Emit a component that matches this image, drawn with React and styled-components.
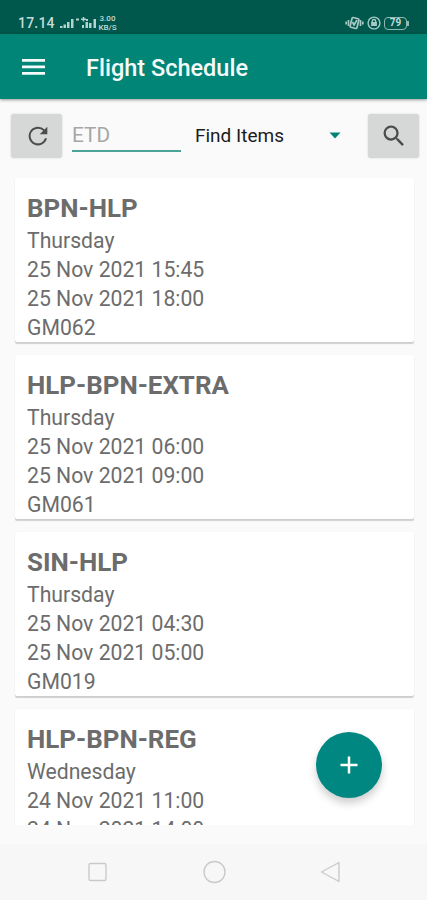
import React from 'react'
import styled, { createGlobalStyle } from 'styled-components'

const GlobalStyle = createGlobalStyle`
    body {
        margin: 0;
        background: #fafafa;
        font-family: Roboto, "Liberation Sans", sans-serif;
    }

    * {
        box-sizing: border-box;
    }
`

const Screen = styled.div`
    display: flex;
    flex-direction: column;
    width: 427px;
    height: 900px;
    overflow: hidden;
    background: #fafafa;
`

const StatusBar = styled.div`
    display: flex;
    flex: none;
    justify-content: space-between;
    height: 34px;
    padding: 14px 18px 0 18px;
    background: #00574b;
    color: #c3dcd8;
`

const StatusGroup = styled.div`
    display: flex;
    align-items: center;
    height: 18px;
    gap: ${props => props.$gap || 0}px;
`

const Clock = styled.span`
    width: 41px;
    font-size: 14px;
    font-weight: 500;
    line-height: 18px;
    letter-spacing: 0.2px;
`

const Speed = styled.div`
    display: flex;
    flex-direction: column;
    align-items: center;
    width: 19px;
    font-size: 8px;
    font-weight: 500;
    line-height: 9px;
`

const Battery = styled.div`
    display: flex;
    align-items: center;
    justify-content: center;
    width: 23px;
    height: 13px;
    border: 1px solid #8fbab4;
    border-radius: 4px;
    font-size: 10px;
    font-weight: 700;
    line-height: 10px;
`

const BatteryTip = styled.div`
    width: 2px;
    height: 5px;
    background: #8fbab4;
`

const AppBar = styled.div`
    display: flex;
    flex: none;
    align-items: center;
    height: 65px;
    padding-left: 22px;
    background: #008577;
    box-shadow: 0 1px 3px rgba(0, 0, 0, 0.4);
    color: #f4fbfa;
`

const AppTitle = styled.h1`
    margin: 3px 0 0 40px;
    font-size: 23.5px;
    font-weight: 500;
    line-height: 30px;
`

const Toolbar = styled.div`
    display: flex;
    flex: none;
    align-items: center;
    height: 79px;
    padding: 0 8px 6px 11px;
`

const ToolButton = styled.button`
    display: flex;
    align-items: center;
    justify-content: center;
    width: 51px;
    height: 44px;
    padding: ${props => props.$pad || '0'};
    border: 0;
    border-radius: 3px;
    background: #d6d8d7;
    box-shadow: 0 0 2px rgba(0, 0, 0, 0.18);
    color: #4c4c4c;
`

const SearchField = styled.div`
    width: 109px;
    height: 32px;
    margin: 0 14px 0 10px;
    border-bottom: 2px solid #4ba297;
    color: #a6a6a6;
    font-size: 20.8px;
    line-height: 31px;
`

const Picker = styled.div`
    display: flex;
    align-items: center;
    justify-content: space-between;
    width: 146px;
    margin-right: 27px;
    color: #1c1c1c;
    font-size: 19px;
    line-height: 24px;
`

const List = styled.div`
    display: flex;
    flex-direction: column;
    flex: none;
    gap: 13px;
    height: 647px;
    padding: 0 13px 0 15px;
    overflow: hidden;
`

const Card = styled.div`
    flex: none;
    height: 164px;
    padding: 14px 12px 0;
    border-radius: 2px;
    background: #fff;
    box-shadow: 0 2px 1px rgba(0, 0, 0, 0.17), 0 0 1px rgba(0, 0, 0, 0.08);
    color: #6c6c6c;
`

const Route = styled.h2`
    margin: 0 0 2px;
    font-size: 25.9px;
    font-weight: 700;
    line-height: 32px;
`

const Line = styled.div`
    font-size: 21.2px;
    line-height: 29px;
    white-space: nowrap;
`

const AddButton = styled.button`
    position: absolute;
    left: 316px;
    top: 732px;
    display: flex;
    align-items: center;
    justify-content: center;
    width: 66px;
    height: 66px;
    padding: 0;
    border: 0;
    border-radius: 50%;
    background: #008781;
    box-shadow: 0 5px 8px rgba(0, 0, 0, 0.2);
`

const NavBar = styled.div`
    display: flex;
    flex: none;
    align-items: center;
    justify-content: space-between;
    height: 56px;
    margin-top: 19px;
    padding: 0 85px 0 87px;
    background: #f7f7f7;
`

const flights = [
    { route: 'BPN-HLP', day: 'Thursday', etd: '25 Nov 2021 15:45', eta: '25 Nov 2021 18:00', code: 'GM062' },
    { route: 'HLP-BPN-EXTRA', day: 'Thursday', etd: '25 Nov 2021 06:00', eta: '25 Nov 2021 09:00', code: 'GM061' },
    { route: 'SIN-HLP', day: 'Thursday', etd: '25 Nov 2021 04:30', eta: '25 Nov 2021 05:00', code: 'GM019' },
    { route: 'HLP-BPN-REG', day: 'Wednesday', etd: '24 Nov 2021 11:00', eta: '24 Nov 2021 14:00', code: '' }
]

const SignalIcon = () =>
    <svg width="39" height="14" viewBox="0 0 39 14" fill="#b4d2ce">
        <path d="M1 10h2.500v2H1zM4.500 8.500H7V12H4.500zM8 6h2.500v6H8zM12 3h2.500v9H12z" />
        <path d="M17 2.500h3v2h-3zM22 2.500h5v1.500h-5zM23.700 1h1.600v4.500h-1.600z" />
        <path d="M23 9h2v3h-2zM26.500 6h2.500v6h-2.500zM27 3h2v2h-2zM30 7h2.500v5H30zM34.500 3H37v9h-2.500z" />
    </svg>

const VibrateIcon = () =>
    <svg width="19" height="14" viewBox="0 0 19 14" fill="none" stroke="#a5cac5" strokeWidth="1.700">
        <rect x="6" y="2" width="7" height="10" rx="1" transform="rotate(14 9.500 7)" />
        <path d="M3.500 4v6M1.200 5.500v3M15.500 4v6M17.800 5.500v3M7.500 6l1.500 3 3-5" />
    </svg>

const LockIcon = () =>
    <svg width="14" height="14" viewBox="0 0 14 14" fill="none" stroke="#a5cac5" strokeWidth="1.400">
        <circle cx="7" cy="7" r="5.900" />
        <path d="M5.300 6.500V5.200a1.700 1.700 0 0 1 3.400 0v1.300" />
        <rect x="4.800" y="6.700" width="4.400" height="2.600" fill="#a5cac5" />
    </svg>

const MenuIcon = () =>
    <svg width="24" height="18" viewBox="0 0 24 18" fill="#f4fbfa">
        <path d="M0 1h23v2.800H0zM0 7.500h23v2.800H0zM0 14h23v2.800H0z" />
    </svg>

const RefreshIcon = () =>
    <svg width="28" height="28" viewBox="0 0 24 24" fill="currentColor">
        <path d="M17.650 6.350A8 8 0 1 0 19.730 14h-1.800A6.300 6.300 0 1 1 12 5.700c1.740 0 3.300.72 4.450 1.850L13.500 10.500H20V4z" />
    </svg>

const SearchIcon = () =>
    <svg width="28" height="28" viewBox="0 0 24 24" fill="currentColor">
        <path d="M15.500 14h-.79l-.28-.27A6.470 6.470 0 0 0 16 9.500 6.500 6.500 0 1 0 9.500 16c1.610 0 3.090-.59 4.230-1.570l.27.28v.79l5 4.990L20.490 19l-4.990-5zm-6 0C7.010 14 5 11.990 5 9.500S7.010 5 9.500 5 14 7.010 14 9.500 11.990 14 9.500 14z" />
    </svg>

const ArrowIcon = () =>
    <svg width="12" height="7" viewBox="0 0 12 7">
        <path d="M0.500 0.500h11L6 6.500z" fill="#008577" />
    </svg>

const FlightCard = ({ flight }) =>
    <Card>
        <Route>{flight.route}</Route>
        <Line>{flight.day}</Line>
        <Line>{flight.etd}</Line>
        <Line>{flight.eta}</Line>
        {flight.code && <Line>{flight.code}</Line>}
    </Card>

const App = () =>
    <Screen>
        <GlobalStyle />
        <StatusBar>
            <StatusGroup>
                <Clock>17.14</Clock>
                <SignalIcon />
                <Speed>
                    <span>3.00</span>
                    <span>KB/S</span>
                </Speed>
            </StatusGroup>
            <StatusGroup $gap={3}>
                <VibrateIcon />
                <LockIcon />
                <StatusGroup>
                    <Battery>79</Battery>
                    <BatteryTip />
                </StatusGroup>
            </StatusGroup>
        </StatusBar>
        <AppBar>
            <MenuIcon />
            <AppTitle>Flight Schedule</AppTitle>
        </AppBar>
        <Toolbar>
            <ToolButton aria-label="Refresh" $pad="0 0 0 3px"><RefreshIcon /></ToolButton>
            <SearchField>ETD</SearchField>
            <Picker>
                Find Items
                <ArrowIcon />
            </Picker>
            <ToolButton aria-label="Search"><SearchIcon /></ToolButton>
        </Toolbar>
        <List>
            {flights.map(flight => <FlightCard key={flight.route} flight={flight} />)}
        </List>
        <NavBar>
            <svg width="22" height="22" fill="none" stroke="#cacaca" strokeWidth="1.400">
                <rect x="2" y="2.500" width="17" height="17" rx="1.500" />
            </svg>
            <svg width="24" height="24" fill="none" stroke="#cacaca" strokeWidth="1.400">
                <circle cx="11.500" cy="12" r="10.500" />
            </svg>
            <svg width="22" height="24" fill="none" stroke="#cacaca" strokeWidth="1.400" strokeLinejoin="round">
                <path d="M19 2.500v19L1.500 12z" />
            </svg>
        </NavBar>
        <AddButton aria-label="Add">
            <svg width="18" height="18" fill="none" stroke="#fff" strokeWidth="2.500">
                <path d="M9 0.500v17M0.500 9h17" />
            </svg>
        </AddButton>
    </Screen>

export default App
